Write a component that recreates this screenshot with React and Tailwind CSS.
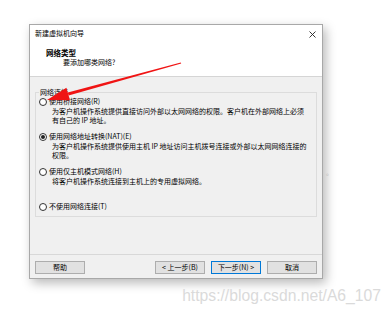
import React from 'react'

const cjk = { fontFamily: '"Noto Sans CJK SC", "Noto Sans", sans-serif' }

function Radio({ checked }) {
  return (
    <span className="w-[8px] h-[8px] rounded-full border border-[#333] bg-white flex items-center justify-center shrink-0">
      {checked && <span className="w-[4px] h-[4px] rounded-full bg-[#222]" />}
    </span>
  )
}

function Option({ label, lines, checked, className }) {
  return (
    <div className={className}>
      <div className="flex items-center gap-[2px] pl-[3px]">
        <Radio checked={checked} />
        <span>{label}</span>
      </div>
      {lines && (
        <div className="pl-[16px]">
          {lines.map((l) => (
            <div key={l} className="whitespace-nowrap">{l}</div>
          ))}
        </div>
      )}
    </div>
  )
}

function Btn({ children, primary }) {
  return (
    <button
      className={
        'w-[50px] h-[13px] flex items-center justify-center bg-[#e1e1e1] border ' +
        (primary ? 'border-[#0078d7]' : 'border-[#adadad]')
      }
    >
      {children}
    </button>
  )
}

export default function App() {
  return (
    <div className="relative w-[391px] h-[316px] bg-white overflow-hidden text-[7px] leading-[9.5px] text-black" style={cjk}>
      <div className="pt-[24px] pl-[29px]">
        <div className="w-[294px] border border-[#a8a8a8] bg-[#f0f0f0] shadow-[3px_4px_10px_rgba(0,0,0,0.28)]">
          {/* title + header */}
          <div className="bg-white h-[51px] flex flex-col">
            <div className="h-[18px] flex items-center justify-between pl-[5px] pr-[6px]">
              <span>新建虚拟机向导</span>
              <svg width="7" height="7" viewBox="0 0 7 7">
                <path d="M0.5 0.5 L6.5 6.5 M6.5 0.5 L0.5 6.5" stroke="#222" strokeWidth="0.9" />
              </svg>
            </div>
            <div className="pl-[16px] pt-[5px]">
              <div className="font-bold text-[7.5px]">网络类型</div>
              <div className="pl-[17px]">要添加哪类网络?</div>
            </div>
          </div>
          <div className="h-px bg-[#d5d5d5]" />
          {/* body */}
          <div className="pt-[11px] px-[5px]">
            <fieldset className="border border-[#dcdcdc] h-[129px] pt-0 px-0">
              <legend className="ml-[3px] px-[1px] leading-[9px]">网络连接</legend>
              <Option
                label="使用桥接网络(R)"
                lines={['为客户机操作系统提供直接访问外部以太网网络的权限。客户机在外部网络上必须', '有自己的 IP 地址。']}
              />
              <Option
                className="mt-[6.5px]"
                checked
                label="使用网络地址转换(NAT)(E)"
                lines={['为客户机操作系统提供使用主机 IP 地址访问主机拨号连接或外部以太网网络连接的', '权限。']}
              />
              <Option
                className="mt-[6.5px]"
                label="使用仅主机模式网络(H)"
                lines={['将客户机操作系统连接到主机上的专用虚拟网络。']}
              />
              <Option className="mt-[16px]" label="不使用网络连接(T)" />
            </fieldset>
          </div>
          <div className="h-[37px]" />
          <div className="h-px bg-[#d8d8d8]" />
          <div className="h-[23px] flex items-start pt-[6px] px-[5px]">
            <Btn>帮助</Btn>
            <div className="flex-1" />
            <div className="flex gap-[6px]">
              <Btn>&lt; 上一步(B)</Btn>
              <Btn primary>下一步(N) &gt;</Btn>
              <Btn>取消</Btn>
            </div>
          </div>
        </div>
      </div>

      {/* background text fragment */}
      <span className="absolute left-[326px] top-[168px] text-[#b8b8b8]">。</span>

      {/* watermark */}
      <div
        className="absolute right-[10px] top-[286px] text-[15.7px] leading-[20px] text-[#dadada]"
        style={{ fontFamily: '"Liberation Sans", Arial, sans-serif' }}
      >
        https://blog.csdn.net/A6_107
      </div>

      {/* red arrow */}
      <svg className="absolute left-0 top-0" width="391" height="316">
        <polygon points="181.2,63.5 180.8,62.4 67.8,92.6 68.6,95.6" fill="#f01414" />
        <polygon points="47,100 66.4,87.8 70,100.2" fill="#f01414" />
      </svg>
    </div>
  )
}
